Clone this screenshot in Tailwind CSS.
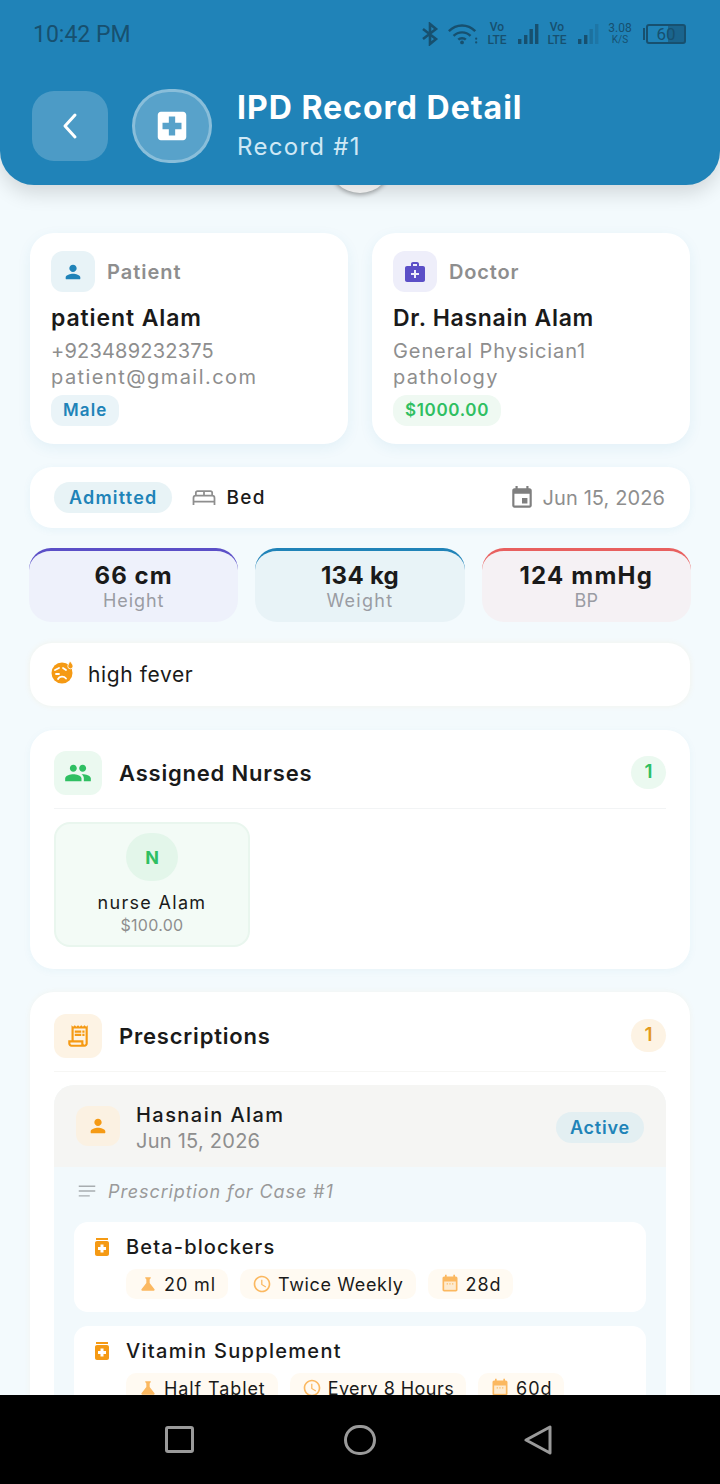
<!DOCTYPE html>
<html lang="en">
<head>
<meta charset="utf-8">
<script src="https://cdn.jsdelivr.net/npm/@tailwindcss/browser@4"></script>
</head>
<body class="m-0 bg-black">
<div class="w-[720px] h-[1484px] flex flex-col overflow-hidden relative bg-[#f3fafd] font-['Inter','Noto_Sans',sans-serif] text-[#1a1a1a]">

  <!-- Header -->
  <header class="relative z-10 h-[185px] shrink-0 bg-[#2083b8] rounded-b-[34px] shadow-[0_8px_20px_rgba(0,0,0,0.14)]">
    <div class="flex items-center justify-between h-[68px] pl-[33px] pr-[34px] text-[#17506f]">
      <span class="font-['Roboto',sans-serif] text-[23px] leading-none">10:42 PM</span>
      <div class="flex items-center">
        <svg class="w-[20px] h-[24px]" viewBox="0 0 20 24" fill="none" stroke="#17506f" stroke-width="2.6"><path d="M3 7l13 10-6 5V2l6 5L3 17"/></svg>
        <svg class="w-[32px] h-[24px] ml-[7px]" viewBox="0 0 34 24" fill="none" stroke="#17506f" stroke-width="2.6"><path d="M2 9c8-8 20-8 28 0M7 14c5-5 13-5 18 0M12 18c2-2 6-2 8 0"/><circle cx="16" cy="21" r="2" fill="#17506f" stroke="none"/><circle cx="31" cy="17" r="1.2" fill="#17506f" stroke="none"/><circle cx="31" cy="21" r="1.2" fill="#17506f" stroke="none"/></svg>
        <div class="w-[22px] ml-[7px] font-['Roboto',sans-serif] text-[12px] leading-[13px] text-center font-medium">Vo<br>LTE</div>
        <svg class="w-[24px] h-[22px] ml-[8px]" viewBox="0 0 22 22" fill="#17506f"><rect x="1" y="16" width="3.4" height="5"/><rect x="7" y="12" width="3.4" height="9"/><rect x="12.5" y="6" width="3.4" height="15"/><rect x="18" y="1" width="3.4" height="20"/></svg>
        <div class="w-[22px] ml-[6px] font-['Roboto',sans-serif] text-[12px] leading-[13px] text-center font-medium">Vo<br>LTE</div>
        <svg class="w-[24px] h-[22px] ml-[8px]" viewBox="0 0 22 22" fill="#17506f"><rect x="1" y="16" width="3.4" height="5"/><rect x="7" y="12" width="3.4" height="9"/><rect x="12.5" y="6" width="3.4" height="15" opacity=".35"/><rect x="18" y="1" width="3.4" height="20" opacity=".25"/></svg>
        <div class="w-[28px] ml-[6px] font-['Roboto',sans-serif] text-[12px] leading-[11px] text-center">3.08<br><span class="text-[10px]">K/S</span></div>
        <div class="flex items-center ml-[9px]">
          <span class="w-[2px] h-[12px] bg-[#17506f] mr-[1px]"></span>
          <div class="relative w-[40px] h-[20px] border-2 border-[#17506f] rounded-[3px] flex items-center justify-center font-['Roboto',sans-serif] text-[17px] leading-none">
            <span class="absolute right-0 top-0 bottom-0 w-[16px] bg-[#17506f]/60"></span>
            <span class="relative">60</span>
          </div>
        </div>
      </div>
    </div>
    <div class="flex items-center pl-[32px] mt-[18px]">
      <button class="w-[76px] h-[70px] rounded-[22px] bg-white/20 flex items-center justify-center">
        <svg class="w-[24px] h-[32px]" viewBox="0 0 24 32" fill="none" stroke="#fff" stroke-width="3" stroke-linecap="round" stroke-linejoin="round"><path d="M17 5L7 16l10 11"/></svg>
      </button>
      <div class="w-[80px] h-[74px] ml-[24px] rounded-full bg-white/25 border-[3px] border-white/30 flex items-center justify-center">
        <svg class="w-[38px] h-[38px]" viewBox="0 0 24 24" fill="#fff"><path d="M19 3H5c-1.100 0-1.990.9-1.990 2L3 19c0 1.100.9 2 2 2h14c1.100 0 2-.9 2-2V5c0-1.100-.9-2-2-2zm-1 11h-4v4h-4v-4H6v-4h4V6h4v4h4v4z"/></svg>
      </div>
      <div class="ml-[25px] mt-[3px]">
        <h1 class="text-[32px] leading-[38px] font-bold text-white tracking-[1px] whitespace-nowrap">IPD Record Detail</h1>
        <p class="pt-[1px] text-[24px] leading-[38px] text-[#cfe8f5] tracking-[1.3px]">Record #1</p>
      </div>
    </div>
  </header>
  <div class="absolute z-0 left-[328px] top-[129px] w-[64px] h-[64px] rounded-full bg-white shadow-[0_2px_4px_rgba(0,0,0,0.3)]"></div>

  <!-- Scrollable content -->
  <main class="flex-1 overflow-hidden px-[30px] pt-[48px]">
    <div class="grid grid-cols-2 gap-[24px]">
      <section class="h-[211px] rounded-[24px] bg-white shadow-[0_4px_14px_rgba(32,131,184,0.08)] pt-[18px] px-[21px]">
        <div class="flex items-center gap-[12px]">
          <div class="w-[44px] h-[41px] rounded-[12px] bg-[#e8f3f7] flex items-center justify-center">
            <svg class="w-[22px] h-[22px]" viewBox="0 0 24 24" fill="#2083b8"><path d="M12 12c2.210 0 4-1.790 4-4s-1.790-4-4-4-4 1.790-4 4 1.790 4 4 4zm0 2c-2.670 0-8 1.340-8 4v1c0 .55.45 1 1 1h14c.55 0 1-.45 1-1v-1c0-2.660-5.330-4-8-4z"/></svg>
          </div>
          <span class="text-[20px] font-semibold text-[#8e8e8e] tracking-[1px]">Patient</span>
        </div>
        <p class="mt-[11px] text-[23px] leading-[30px] font-semibold tracking-[0.9px]">patient Alam</p>
        <p class="mt-[5px] text-[20px] leading-[26px] text-[#8e8e8e] tracking-[0.2px]">+923489232375</p>
        <p class="text-[20px] leading-[26px] text-[#8e8e8e] tracking-[1.45px]">patient@gmail.com</p>
        <span class="inline-flex items-center h-[31px] mt-[5px] px-[12px] rounded-[12px] bg-[#eaf4f8] text-[#2083b8] text-[17px] font-semibold tracking-[1.1px]">Male</span>
      </section>
      <section class="h-[211px] rounded-[24px] bg-white shadow-[0_4px_14px_rgba(32,131,184,0.08)] pt-[18px] px-[21px]">
        <div class="flex items-center gap-[12px]">
          <div class="w-[44px] h-[41px] rounded-[12px] bg-[#eeeefa] flex items-center justify-center">
            <svg class="w-[24px] h-[24px]" viewBox="0 0 24 24" fill="#5b4fc7"><path d="M20 6h-4V4c0-1.100-.9-2-2-2h-4c-1.100 0-2 .9-2 2v2H4c-1.100 0-2 .9-2 2v12c0 1.100.9 2 2 2h16c1.100 0 2-.9 2-2V8c0-1.100-.9-2-2-2zM10 4h4v2h-4V4zm6 11h-3v3h-2v-3H8v-2h3v-3h2v3h3v2z"/></svg>
          </div>
          <span class="text-[20px] font-semibold text-[#8e8e8e] tracking-[0.85px]">Doctor</span>
        </div>
        <p class="mt-[11px] text-[23px] leading-[30px] font-semibold tracking-[0.7px]">Dr. Hasnain Alam</p>
        <p class="mt-[5px] text-[20px] leading-[26px] text-[#8e8e8e] tracking-[0.9px]">General Physician1</p>
        <p class="text-[20px] leading-[26px] text-[#8e8e8e] tracking-[1.25px]">pathology</p>
        <span class="inline-flex items-center h-[31px] mt-[5px] px-[12px] rounded-[14px] bg-[#eff9f2] text-[#2fbf62] text-[17px] font-semibold tracking-[0.65px]">$1000.00</span>
      </section>
    </div>

    <!-- Status row -->
    <section class="mt-[23px] h-[61px] rounded-[22px] bg-white shadow-[0_2px_8px_rgba(32,131,184,0.06)] flex items-center pl-[24px] pr-[25px]">
      <span class="inline-flex items-center h-[31px] px-[15px] rounded-full bg-[#e8f3f6] text-[#2083b8] text-[18px] font-semibold tracking-[1.2px]">Admitted</span>
      <svg class="w-[28px] h-[28px] ml-[18px]" viewBox="0 0 24 24" fill="none" stroke="#8e8e8e" stroke-width="1.5"><path d="M3 18v-6a2 2 0 0 1 2-2h14a2 2 0 0 1 2 2v6M3 15h18M5 10V7.500A1.500 1.500 0 0 1 6.500 6h11A1.500 1.500 0 0 1 19 7.500V10M12 6v4"/></svg>
      <span class="ml-[8px] text-[19px] font-medium tracking-[1.4px] leading-none">Bed</span>
      <svg class="w-[26px] h-[26px] ml-auto" viewBox="0 0 24 24" fill="#7f7f7f"><path d="M17 12h-5v5h5v-5zM16 1v2H8V1H6v2H5c-1.110 0-1.990.9-1.990 2L3 19c0 1.100.89 2 2 2h14c1.100 0 2-.9 2-2V5c0-1.100-.9-2-2-2h-1V1h-2zm3 18H5V8h14v11z"/></svg>
      <span class="ml-[8px] text-[20px] text-[#8e8e8e] tracking-[0.1px]">Jun 15, 2026</span>
    </section>

    <!-- Vitals -->
    <section class="mt-[20px] -mx-px flex gap-[17px]">
      <div class="w-[210px] h-[74px] rounded-[22px] border-t-[3px] border-[#5b4fc7] bg-[#eef1fb] flex flex-col items-center pt-[11px]">
        <span class="text-[24px] leading-[27px] font-bold tracking-[1.1px]">66 cm</span>
        <span class="text-[18px] leading-[23px] text-[#9a9ca3] tracking-[0.9px]">Height</span>
      </div>
      <div class="w-[210px] h-[74px] rounded-[22px] border-t-[3px] border-[#2083b8] bg-[#e8f3f7] flex flex-col items-center pt-[11px]">
        <span class="text-[24px] leading-[27px] font-bold tracking-[0.3px]">134 kg</span>
        <span class="text-[18px] leading-[23px] text-[#9a9ca3] tracking-[1.3px]">Weight</span>
      </div>
      <div class="w-[210px] h-[74px] rounded-[22px] border-t-[3px] border-[#e8605f] bg-[#f5f1f4] flex flex-col items-center pt-[11px]">
        <span class="text-[24px] leading-[27px] font-bold tracking-[1.2px]">124 mmHg</span>
        <span class="text-[18px] leading-[23px] text-[#9a9ca3] tracking-[0.3px]">BP</span>
      </div>
    </section>

    <!-- Symptom -->
    <section class="mt-[21px] h-[63px] rounded-[22px] bg-white shadow-[0_0_6px_rgba(245,154,20,0.08)] flex items-center pl-[21px]">
      <svg class="w-[24px] h-[24px] -mt-[6px]" viewBox="0 0 24 24"><circle cx="11" cy="13" r="10.500" fill="#f59a14"/><path d="M19 1c2 2.500 3 4 3 5.200a2.600 2.600 0 0 1-5.200 0C16.800 5 18 3 19 1z" fill="#f59a14" stroke="#fff" stroke-width=".8"/><path d="M4 10l4-2M12 8l3 2M5 14h3M7 19c1.500-3 6-3 8-.5" fill="none" stroke="#fff" stroke-width="1.800" stroke-linecap="round"/></svg>
      <span class="ml-[13px] mt-[1px] text-[21px] tracking-[0.6px] font-normal">high fever</span>
    </section>

    <!-- Nurses -->
    <section class="mt-[24px] h-[239px] rounded-[24px] bg-white shadow-[0_2px_8px_rgba(32,131,184,0.05)] px-[24px] pt-[21px]">
      <div class="flex items-center h-[58px] pb-[14px] border-b border-[#f2f4f5]">
        <div class="w-[48px] h-[44px] rounded-[12px] bg-[#ebf9f0] flex items-center justify-center">
          <svg class="w-[28px] h-[28px]" viewBox="0 0 24 24" fill="#2fbf62"><path d="M16 11c1.660 0 2.990-1.340 2.990-3S17.660 5 16 5c-1.660 0-3 1.340-3 3s1.340 3 3 3zm-8 0c1.660 0 2.990-1.340 2.990-3S9.660 5 8 5C6.340 5 5 6.340 5 8s1.340 3 3 3zm0 2c-2.330 0-7 1.170-7 3.500V19h14v-2.500c0-2.330-4.670-3.500-7-3.500zm8 0c-.29 0-.62.02-.97.05 1.160.84 1.970 1.970 1.970 3.450V19h6v-2.500c0-2.330-4.670-3.500-7-3.500z"/></svg>
        </div>
        <h2 class="ml-[17px] mt-[1px] text-[22px] font-semibold tracking-[0.8px]">Assigned Nurses</h2>
        <span class="ml-auto w-[35px] h-[33px] rounded-full bg-[#ebf9f0] flex items-center justify-center text-[#2fbf62] text-[19px] font-semibold">1</span>
      </div>
      <div class="mt-[13px] w-[196px] h-[125px] rounded-[16px] bg-[#f3fbf6] border-2 border-[#e9f6ee] flex flex-col items-center pt-[10px]">
        <div class="w-[52px] h-[48px] rounded-full bg-[#e3f6ea] flex items-center justify-center text-[#2fbf62] text-[18px] font-bold -translate-y-px">N</div>
        <span class="mt-[9px] text-[18px] leading-[24px] tracking-[1.3px]">nurse Alam</span>
        <span class="text-[16px] leading-[21px] text-[#8e8e8e] tracking-[0.3px]">$100.00</span>
      </div>
    </section>

    <!-- Prescriptions -->
    <section class="mt-[23px] rounded-t-[24px] bg-white px-[24px] pt-[22px] shadow-[0_0_6px_rgba(245,154,20,0.06)]">
      <div class="flex items-center h-[58px] pb-[14px] border-b border-[#f6f6f4]">
        <div class="w-[48px] h-[44px] rounded-[12px] bg-[#fdf3e4] flex items-center justify-center">
          <svg class="w-[26px] h-[26px]" viewBox="0 0 24 24" fill="#f59a14"><path d="M19.500 3.500L18 2l-1.500 1.500L15 2l-1.500 1.500L12 2l-1.500 1.500L9 2 7.500 3.500 6 2v14H3v3c0 1.660 1.340 3 3 3h12c1.660 0 3-1.340 3-3V2l-1.500 1.500zM15 20H6c-.55 0-1-.45-1-1v-1h10v2zm4-1c0 .55-.45 1-1 1s-1-.45-1-1v-3H8V5h11v14zM9 7h6v2H9zm7 0h2v2h-2zM9 10h6v2H9zm7 0h2v2h-2z"/></svg>
        </div>
        <h2 class="ml-[17px] mt-[1px] text-[22px] font-semibold tracking-[0.8px]">Prescriptions</h2>
        <span class="ml-auto w-[35px] h-[33px] rounded-full bg-[#fdf3e4] flex items-center justify-center text-[#e39a1e] text-[19px] font-semibold">1</span>
      </div>

      <div class="mt-[13px] rounded-t-[20px] overflow-hidden bg-[#f2f9fc] pb-[20px]">
        <div class="h-[82px] bg-[#f5f5f3] flex items-center pl-[22px] pr-[22px]">
          <div class="w-[44px] h-[40px] rounded-[12px] bg-[#fbf1e2] flex items-center justify-center">
            <svg class="w-[22px] h-[22px]" viewBox="0 0 24 24" fill="#f59a14"><path d="M12 12c2.210 0 4-1.790 4-4s-1.790-4-4-4-4 1.790-4 4 1.790 4 4 4zm0 2c-2.670 0-8 1.340-8 4v1c0 .55.45 1 1 1h14c.55 0 1-.45 1-1v-1c0-2.660-5.330-4-8-4z"/></svg>
          </div>
          <div class="ml-[16px] pt-[4px]">
            <p class="text-[20px] leading-[26px] font-medium tracking-[1.45px]">Hasnain Alam</p>
            <p class="text-[20px] leading-[26px] text-[#8e8e8e] tracking-[0.25px]">Jun 15, 2026</p>
          </div>
          <span class="ml-auto inline-flex items-center h-[31px] mt-[2px] px-[14px] rounded-full bg-[#e3eff2] text-[#2083b8] text-[18px] font-semibold tracking-[0.8px]">Active</span>
        </div>
        <div class="flex items-center h-[48px] pl-[22px]">
          <svg class="w-[22px] h-[22px]" viewBox="0 0 24 24" fill="#a8adb0"><path d="M3 18h12v-1.500H3zM3 6v1.500h18V6zm0 6.800h18v-1.500H3z"/></svg>
          <span class="ml-[10px] text-[18px] italic text-[#9a9a9a] tracking-[0.9px]">Prescription for Case #1</span>
        </div>

        <div class="mx-[20px] mt-[7px] h-[90px] rounded-[14px] bg-white pl-[16px] pt-[11px]">
          <div class="flex items-center">
            <svg class="w-[24px] h-[24px]" viewBox="0 0 24 24" fill="#f59a14"><path d="M6 3h12v2H6zm11 3H7c-1.100 0-2 .9-2 2v11c0 1.100.9 2 2 2h10c1.100 0 2-.9 2-2V8c0-1.100-.9-2-2-2zm-1 9h-2.500v2.500h-3V15H8v-3h2.500V9.500h3V12H16v3z"/></svg>
            <span class="ml-[12px] text-[20px] leading-[28px] font-medium tracking-[1.15px]">Beta-blockers</span>
          </div>
          <div class="mt-[8px] ml-[36px] flex gap-[12px]">
            <span class="inline-flex items-center h-[30px] px-[12px] rounded-[10px] bg-[#fffaf2] text-[18px] tracking-[0.9px]">
              <svg class="w-[20px] h-[20px] mr-[6px]" viewBox="0 0 24 24" fill="#fbb860"><path d="M19.800 18.400L14 10.670V6.500l1.350-1.690c.26-.33.03-.81-.39-.81H9.040c-.42 0-.65.48-.39.81L10 6.500v4.170L4.200 18.400c-.49.66-.02 1.600.8 1.600h14c.82 0 1.290-.94.8-1.600z"/></svg>20 ml</span>
            <span class="inline-flex items-center h-[30px] px-[12px] rounded-[10px] bg-[#fffaf2] text-[18px] tracking-[0.65px]">
              <svg class="w-[20px] h-[20px] mr-[6px]" viewBox="0 0 24 24" fill="#fbb860"><path d="M11.990 2C6.470 2 2 6.480 2 12s4.470 10 9.990 10C17.520 22 22 17.520 22 12S17.520 2 11.990 2zM12 20c-4.420 0-8-3.580-8-8s3.580-8 8-8 8 3.580 8 8-3.580 8-8 8zm.5-13H11v6l5.250 3.150.75-1.230-4.500-2.670z"/></svg>Twice Weekly</span>
            <span class="inline-flex items-center h-[30px] px-[12px] rounded-[10px] bg-[#fffaf2] text-[18px] tracking-[0.9px]">
              <svg class="w-[20px] h-[20px] mr-[6px]" viewBox="0 0 24 24"><path d="M8 1v2h8V1h2v2h1c1.100 0 2 .9 2 2v14c0 1.100-.9 2-2 2H5c-1.100 0-2-.9-2-2V5c0-1.100.9-2 2-2h1V1z" fill="#fbb860"/><path d="M5 9h14v10H5z" fill="#fdebd0"/><path d="M8 11h1.500v1.500H8zm3.200 0h1.500v1.500h-1.500zm3.300 0H16v1.500h-1.500z" fill="#fbb860"/></svg>28d</span>
          </div>
        </div>

        <div class="mx-[20px] mt-[14px] h-[90px] rounded-[14px] bg-white pl-[16px] pt-[11px]">
          <div class="flex items-center">
            <svg class="w-[24px] h-[24px]" viewBox="0 0 24 24" fill="#f59a14"><path d="M6 3h12v2H6zm11 3H7c-1.100 0-2 .9-2 2v11c0 1.100.9 2 2 2h10c1.100 0 2-.9 2-2V8c0-1.100-.9-2-2-2zm-1 9h-2.500v2.500h-3V15H8v-3h2.500V9.500h3V12H16v3z"/></svg>
            <span class="ml-[12px] text-[20px] leading-[28px] font-medium tracking-[1.3px]">Vitamin Supplement</span>
          </div>
          <div class="mt-[8px] ml-[36px] flex gap-[12px]">
            <span class="inline-flex items-center h-[30px] px-[12px] rounded-[10px] bg-[#fffaf2] text-[18px] tracking-[0.9px]">
              <svg class="w-[20px] h-[20px] mr-[6px]" viewBox="0 0 24 24" fill="#fbb860"><path d="M19.800 18.400L14 10.670V6.500l1.350-1.690c.26-.33.03-.81-.39-.81H9.040c-.42 0-.65.48-.39.81L10 6.500v4.170L4.200 18.400c-.49.66-.02 1.600.8 1.600h14c.82 0 1.290-.94.8-1.600z"/></svg>Half Tablet</span>
            <span class="inline-flex items-center h-[30px] px-[12px] rounded-[10px] bg-[#fffaf2] text-[18px] tracking-[0.45px]">
              <svg class="w-[20px] h-[20px] mr-[6px]" viewBox="0 0 24 24" fill="#fbb860"><path d="M11.990 2C6.470 2 2 6.480 2 12s4.470 10 9.990 10C17.520 22 22 17.520 22 12S17.520 2 11.990 2zM12 20c-4.420 0-8-3.580-8-8s3.580-8 8-8 8 3.580 8 8-3.580 8-8 8zm.5-13H11v6l5.250 3.150.75-1.230-4.500-2.670z"/></svg>Every 8 Hours</span>
            <span class="inline-flex items-center h-[30px] px-[12px] rounded-[10px] bg-[#fffaf2] text-[18px] tracking-[0.9px]">
              <svg class="w-[20px] h-[20px] mr-[6px]" viewBox="0 0 24 24"><path d="M8 1v2h8V1h2v2h1c1.100 0 2 .9 2 2v14c0 1.100-.9 2-2 2H5c-1.100 0-2-.9-2-2V5c0-1.100.9-2 2-2h1V1z" fill="#fbb860"/><path d="M5 9h14v10H5z" fill="#fdebd0"/><path d="M8 11h1.500v1.500H8zm3.200 0h1.500v1.500h-1.500zm3.300 0H16v1.500h-1.500z" fill="#fbb860"/></svg>60d</span>
          </div>
        </div>
      </div>
    </section>
  </main>

  <!-- Android nav bar -->
  <nav class="relative z-10 h-[89px] shrink-0 bg-black flex items-center justify-between pl-[165px] pr-[168px]">
    <span class="w-[29px] h-[27px] rounded-[3px] border-[3px] border-[#9a9a9a]"></span>
    <span class="w-[32px] h-[30px] ml-[2px] rounded-full border-[3px] border-[#9a9a9a]"></span>
    <svg class="w-[28px] h-[30px]" viewBox="0 0 28 30" fill="none" stroke="#9a9a9a" stroke-width="3" stroke-linejoin="round"><path d="M26 2v26L2 15z"/></svg>
  </nav>
</div>
</body>
</html>
